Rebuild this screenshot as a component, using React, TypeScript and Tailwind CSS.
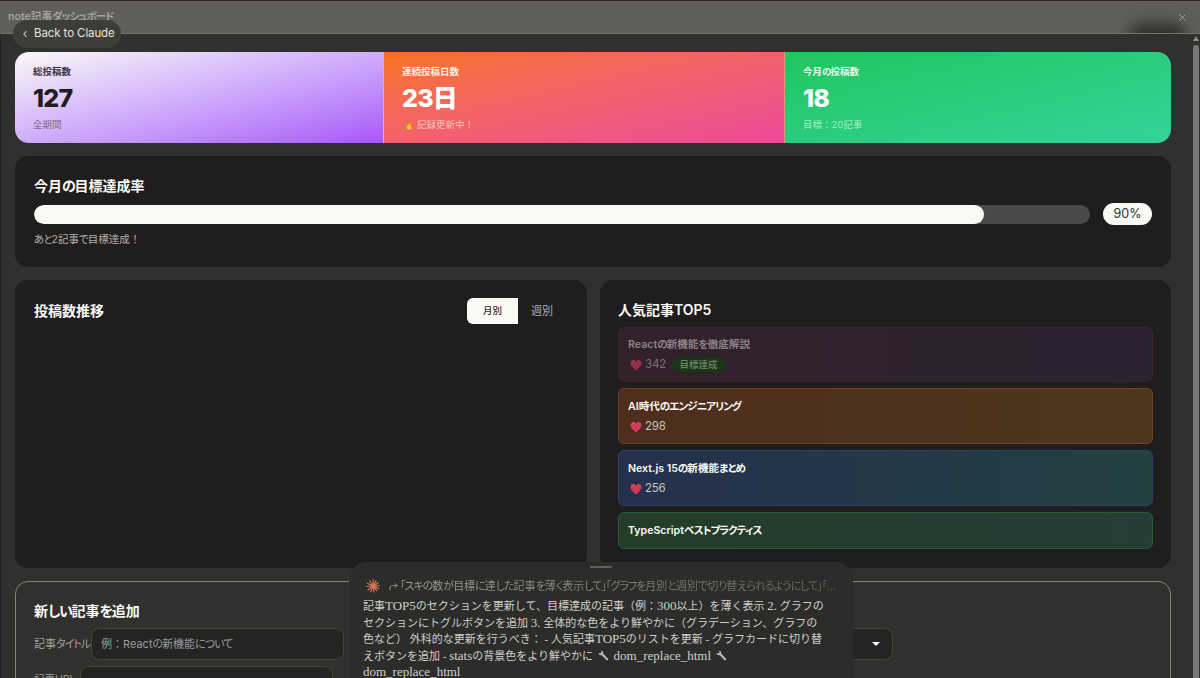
import { useState } from "react";
import { ChevronLeft, X } from "lucide-react";

interface Stat {
  label: string;
  value: string;
  note: string;
  fire?: boolean;
  className: string;
  labelClass: string;
  noteClass: string;
}

interface Article {
  title: string;
  likes?: number;
  achieved?: boolean;
  className: string;
}

const stats: Stat[] = [
  {
    label: "総投稿数",
    value: "127",
    note: "全期間",
    className:
      "w-[369px] border-r border-[#dba8d9] bg-linear-to-br from-[#faf9f5] to-[#a855f7] text-[#1f1e1d]",
    labelClass: "text-[#3d3347]",
    noteClass: "text-[#7f6b92]",
  },
  {
    label: "連続投稿日数",
    value: "23日",
    note: "記録更新中！",
    fire: true,
    className:
      "w-[401px] border-r border-[#dc9a70] bg-linear-to-br from-[#f97316] to-[#ec4899] text-white",
    labelClass: "text-[#fff0e6]",
    noteClass: "text-[#fbc4bb]",
  },
  {
    label: "今月の投稿数",
    value: "18",
    note: "目標：20記事",
    className: "flex-1 bg-linear-to-br from-[#22c55e] to-[#34d399] text-white",
    labelClass: "text-[#e2faea]",
    noteClass: "text-[#a9ecc6]",
  },
];

const articles: Article[] = [
  {
    title: "Reactの新機能を徹底解説",
    likes: 342,
    achieved: true,
    className: "h-[55px] border-[#3b2528] from-[#33212a] to-[#2b2232] pt-[8px]",
  },
  {
    title: "AI時代のエンジニアリング",
    likes: 298,
    className: "h-[56px] border-[#70411f] from-[#4e2d1c] to-[#4b371d] pt-[9px]",
  },
  {
    title: "Next.js 15の新機能まとめ",
    likes: 256,
    className: "h-[56px] border-[#25436b] from-[#24304d] to-[#233f40] pt-[9px]",
  },
  {
    title: "TypeScriptベストプラクティス",
    className: "h-[37px] border-[#275b34] from-[#243d28] to-[#253d36] pt-[9px]",
  },
];

// Sets kana and corner brackets tighter than the kanji around them
function Kana({ text }: { text: string }) {
  return (
    <>
      {text.split(/([「」ぁ-ヿ]+)/).map((part, i) =>
        i % 2 ? (
          <span key={i} className="tracking-[-0.09em] [font-feature-settings:'palt']">
            {part}
          </span>
        ) : (
          part
        )
      )}
    </>
  );
}

// Latin runs are a little larger than the Japanese text in chat messages
function Mixed({ text }: { text: string }) {
  return (
    <>
      {text.split(/([A-Za-z0-9_.]+)/).map((part, i) =>
        i % 2 ? (
          <span key={i} className="text-[13px]">
            {part}
          </span>
        ) : (
          part
        )
      )}
    </>
  );
}

function Heart() {
  return (
    <svg viewBox="0 0 12 12" className="ml-[2px] h-3 w-3">
      <path
        d="M6 11.5C3.5 9.3.5 7 .5 4 .5 2.2 1.8 1 3.3 1 4.5 1 5.5 1.7 6 2.7 6.5 1.7 7.5 1 8.7 1c1.5 0 2.8 1.2 2.8 3 0 3-3 5.3-5.5 7.5Z"
        fill="#d23a5a"
      />
      <path d="M2 3.7C2 2.6 3 2 4 2.3" stroke="#e8738c" strokeWidth=".8" fill="none" />
    </svg>
  );
}

function Fire() {
  return (
    <svg viewBox="0 0 8 10" className="mr-[4px] ml-[3px] h-[10px] w-2">
      <path d="M4.500 0C5 2 7.500 3.500 7.500 6.300 7.500 8.600 6 10 4 10S.5 8.700.5 6.500C.5 5 1.300 4 2 3.200c.1 1 .4 1.500.9 1.700C2.700 3 3.500 1.500 4.500 0Z" fill="#f47b20" />
      <path d="M4.300 3.500c.4 1.200 2.200 2.500 2.200 4.200C6.500 9.100 5.400 9.700 4 9.700S1.700 9 1.700 7.600c0-1.200 2.100-2.600 2.600-4.100Z" fill="#fcc94a" />
    </svg>
  );
}

function Wrench() {
  return (
    <svg viewBox="0 0 12 12" className="mx-[2px] inline h-[11px] w-[11px] align-[-1px]">
      <path d="M3.800 3.800 10 10" stroke="#b5bbc0" strokeWidth="2.300" strokeLinecap="round" />
      <path d="M2.800.8 4.200 2.200 3.500 3.500 2.200 4.200.8 2.800C.3 4.600 1.700 6 3.600 5.800l2.200-2.200C6 1.700 4.600.3 2.800.8Z" fill="#b5bbc0" />
    </svg>
  );
}

function Burst() {
  return (
    <svg viewBox="0 0 14 14" className="h-[14px] w-[14px] shrink-0">
      <g stroke="#d97757" strokeWidth="1.200" strokeLinecap="round">
        <path d="M7 7 7.300.8M7 7l3-5.300M7 7l5.300-3.200M7 7l6.200-.3M7 7l5.700 2.500M7 7l3.800 4.500M7 7l.9 6.100M7 7l-2.300 5.700M7 7l-5 4M7 7 .8 7.500M7 7 1.300 4.300M7 7 3.700 1.800" />
      </g>
    </svg>
  );
}

function StatCard({ stat }: { stat: Stat }) {
  return (
    <div className={`flex flex-col pt-[13px] pl-[18px] ${stat.className}`}>
      <p className={`text-[9.500px] leading-[14px] font-bold ${stat.labelClass}`}>
        <Kana text={stat.label} />
      </p>
      <p className="mt-[3px] text-[25px] leading-[32px] font-extrabold tracking-[-0.8px]">{stat.value}</p>
      <p className={`mt-[4px] flex items-center text-[9.500px] leading-[14px] ${stat.noteClass}`}>
        {stat.fire && <Fire />}
        {stat.note}
      </p>
    </div>
  );
}

function ArticleRow({ article }: { article: Article }) {
  return (
    <li className={`flex flex-col rounded-[6px] border bg-linear-to-r pl-[9px] ${article.className}`}>
      <p
        className={`text-[10.600px] leading-[17px] font-semibold ${
          article.achieved ? "text-[#8b8285]" : "text-[#faf9f5]"
        }`}
      >
        <Kana text={article.title} />
      </p>
      {article.likes && (
        <div
          className={`mt-[3px] flex h-[17px] items-center text-[11.500px] leading-[17px] ${
            article.achieved ? "text-[#796f74]" : "text-[#c9c3bf]"
          }`}
        >
          <span className={article.achieved ? "opacity-60" : ""}>
            <Heart />
          </span>
          <span className="ml-[3px] w-[21px] tracking-[-0.2px]">{article.likes}</span>
          {article.achieved && (
            <span className="ml-[6px] flex h-[15px] w-[53px] items-center justify-center rounded-full bg-[#1b3718] text-[9.500px] text-[#829079]">
              目標達成
            </span>
          )}
        </div>
      )}
    </li>
  );
}

export default function App() {
  const [period, setPeriod] = useState<"month" | "week">("month");

  return (
    <div className="relative flex h-[678px] w-full flex-col overflow-hidden bg-[#30302e] font-['Inter','Noto_Sans_CJK_JP',sans-serif] text-[#faf9f5]">
      {/* Window bar */}
      <header className="relative flex h-[34px] shrink-0 items-center justify-between overflow-hidden border-t border-b border-t-[#2b2724] border-b-[#74736e] bg-[#5f5e5a] pr-[12px] pl-[8px]">
        <div className="absolute top-[22px] right-[14px] h-6 w-[56px] rounded-full bg-[#30302e] blur-[7px]" />
        <h1 className="text-[10.600px] leading-[16px] font-semibold text-[#a3a29d]">
          <Kana text="note記事ダッシュボード" />
        </h1>
        <X className="relative text-[#aaa9a4]" size={11} strokeWidth={2} />
      </header>

      <div className="flex min-h-0 flex-1 border-l border-[#242422]">
        <main className="flex w-[1170px] shrink-0 flex-col gap-[13px] pt-[18px] pl-[14px]">
          <section className="flex h-[91px] shrink-0 overflow-hidden rounded-[14px]">
            {stats.map((stat) => (
              <StatCard key={stat.label} stat={stat} />
            ))}
          </section>

          {/* Monthly goal */}
          <section className="h-[111px] shrink-0 rounded-[13px] bg-[#1f1d1d] px-[19px] pt-[19px]">
            <h2 className="text-[14px] leading-[22px] font-semibold">
              <Kana text="今月の目標達成率" />
            </h2>
            <div className="mt-[6px] flex h-[22px] items-center gap-[13px]">
              <div className="h-[19px] flex-1 overflow-hidden rounded-full bg-[#4b4848]">
                <div className="h-full rounded-full bg-[#faf9f5]" style={{ width: "90%" }} />
              </div>
              <span className="flex h-[22px] w-[49px] items-center justify-center rounded-full bg-[#faf9f5] text-[12.500px] text-[#30302e]">
                90%
              </span>
            </div>
            <p className="mt-[7px] text-[10.500px] leading-[16px] text-[#b4b1ac]">
              <Kana text="あと2記事で目標達成！" />
            </p>
          </section>

          <div className="flex h-[288px] shrink-0 gap-[13px]">
            <section className="w-[572px] rounded-[13px] bg-[#1f1d1d] px-[19px] pt-[18px]">
              <div className="flex h-[26px] items-center justify-between">
                <h2 className="pb-[2px] text-[14px] font-semibold">投稿数推移</h2>
                <div className="mr-[2px] flex h-full overflow-hidden rounded-[6px]">
                  <button
                    onClick={() => setPeriod("month")}
                    className={`w-[51px] text-[9.500px] font-medium ${
                      period === "month" ? "bg-[#faf9f5] text-[#30302e]" : "text-[#b4b1ac]"
                    }`}
                  >
                    月別
                  </button>
                  <button
                    onClick={() => setPeriod("week")}
                    className={`w-[48px] text-[11px] ${
                      period === "week" ? "bg-[#faf9f5] text-[#30302e]" : "text-[#b4b1ac]"
                    }`}
                  >
                    週別
                  </button>
                </div>
              </div>
            </section>

            <section className="flex-1 rounded-[13px] bg-[#1f1d1d] px-[18px] pt-[19px]">
              <h2 className="text-[14px] leading-[22px] font-semibold">人気記事TOP5</h2>
              <ul className="mt-[6px] flex flex-col gap-[6px]">
                {articles.map((article) => (
                  <ArticleRow key={article.title} article={article} />
                ))}
              </ul>
            </section>
          </div>

          {/* New article form */}
          <section className="h-[160px] shrink-0 rounded-t-[13px] border border-[#85847f] px-[18px] pt-[18px]">
            <h2 className="text-[14px] leading-[22px] font-semibold">
              <Kana text="新しい記事を追加" />
            </h2>
            <div className="mt-[6px] flex items-center">
              <label className="w-[57px] text-[11px] whitespace-nowrap text-[#a3a19c]">
                <Kana text="記事タイトル" />
              </label>
              <div className="flex h-[32px] w-[253px] items-center rounded-[8px] border border-[#434340] bg-[#242422] pl-[9px] text-[11px] text-[#979c9f]">
                <span>
                  <Kana text="例：Reactの新機能について" />
                </span>
              </div>
              <div className="ml-[397px] flex h-[32px] w-[152px] items-center justify-end rounded-[8px] border border-[#434340] bg-[#242422] pr-[12px]">
                <span className="h-0 w-0 border-x-[4px] border-t-[4px] border-x-transparent border-t-[#faf9f5]" />
              </div>
            </div>
            <div className="mt-[6px] flex items-start">
              <label className="w-[46px] pt-[6px] text-[10.500px] whitespace-nowrap text-[#a3a19c]">記事URL</label>
              <div className="flex h-[32px] w-[253px] items-start rounded-[8px] border border-[#434340] bg-[#242422] pt-[8px] pl-[9px] text-[11px] text-[#979c9f]">
                https://note.com/...
              </div>
            </div>
          </section>
        </main>

        {/* Scrollbar */}
        <div className="ml-auto flex w-[8px] flex-col items-center pt-[2px]">
          <span className="border-x-[3px] border-b-[5px] border-x-transparent border-b-[#8b8b89]" />
          <span className="mt-[4px] w-[6px] flex-1 rounded-t-full bg-[#777775]" />
        </div>
      </div>

      <button className="absolute top-5 left-[13px] flex h-[28px] w-[108px] items-center rounded-full bg-[#3d3d3a] pl-[7px] text-[11.500px] tracking-[-0.1px] text-[#e5e4df]">
        <ChevronLeft size={10} strokeWidth={2.5} />
        <span className="ml-[4px] whitespace-nowrap">Back to Claude</span>
      </button>

      {/* Chat overlay */}
      <aside className="absolute top-[562px] left-[349px] h-[140px] w-[504px] rounded-t-[18px] bg-[#2c2c2a] px-[14px] pt-[16px]">
        <span className="absolute top-[4px] left-[241px] h-[2px] w-[22px] rounded-full bg-[#62615e]" />
        <div className="flex h-[16px] items-center pl-[3px]">
          <Burst />
          <svg viewBox="0 0 10 10" className="ml-[9px] h-[9px] w-[9px] shrink-0" fill="none" stroke="#9b9a95">
            <path d="M1 9V7c0-2 1-3 3-3h5M6.500 1.500 9 4 6.500 6.500" />
          </svg>
          <p className="ml-[2px] bg-linear-to-r from-[#a09f9a] to-[#62615e] bg-clip-text text-[11px] leading-[16px] whitespace-nowrap text-transparent">
            <Kana text="「スキの数が目標に達した記事を薄く表示して」「グラフを月別と週別で切り替えられるようにして」「..." />
          </p>
        </div>
        <div className="mt-[4px] font-['Liberation_Serif','Noto_Sans_CJK_JP',serif] text-[11px] leading-[16.600px] whitespace-nowrap text-[#d1d0ca]">
          <p>
            <Mixed text="記事TOP5のセクションを更新して、目標達成の記事（例：300以上）を薄く表示 2. グラフの" />
          </p>
          <p>
            <Mixed text="セクションにトグルボタンを追加 3. 全体的な色をより鮮やかに（グラデーション、グラフの" />
          </p>
          <p>
            <Mixed text="色など） 外科的な更新を行うべき： - 人気記事TOP5のリストを更新 - グラフカードに切り替" />
          </p>
          <p>
            <Mixed text="えボタンを追加 - statsの背景色をより鮮やかに " />
            <Wrench /> <Mixed text="dom_replace_html" /> <Wrench />
          </p>
          <p>
            <Mixed text="dom_replace_html" />
          </p>
        </div>
      </aside>
    </div>
  );
}
